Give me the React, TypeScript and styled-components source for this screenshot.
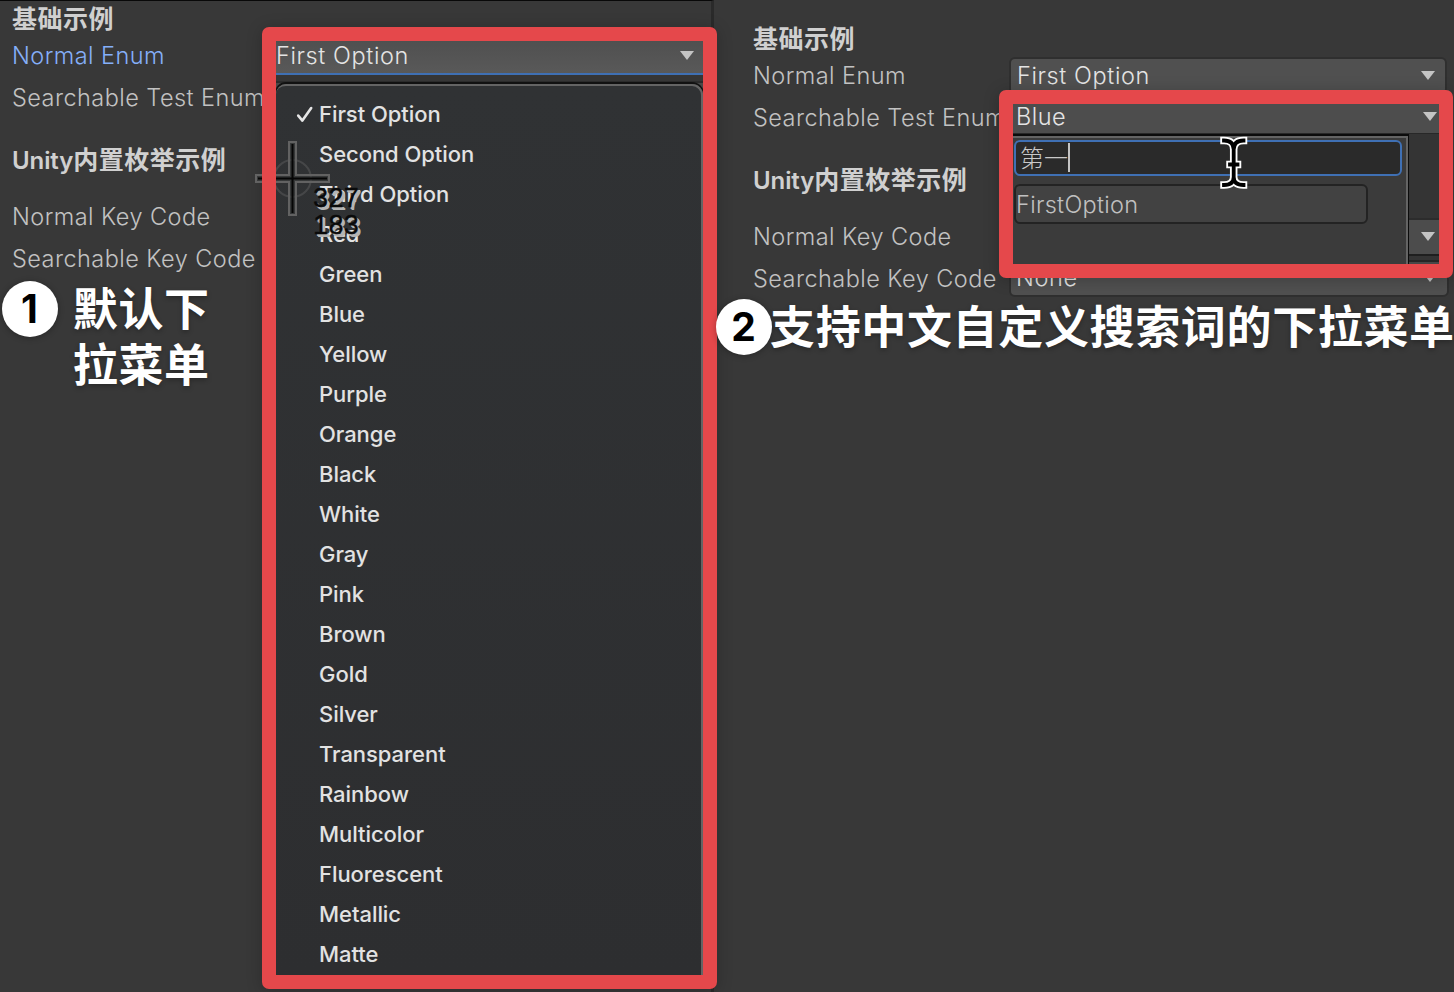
import React from "react";
import styled, { createGlobalStyle } from "styled-components";

const Global = createGlobalStyle`
  * { box-sizing: border-box; }
  html, body { margin: 0; padding: 0; background: #383838; }
  body { overflow: hidden; }
`;

const Page = styled.div`
  position: relative;
  display: flex;
  width: 1454px;
  height: 992px;
  overflow: hidden;
  background: #383838;
  font-family: Inter, "Noto Sans CJK SC", sans-serif;
`;

const Panel = styled.section<{ $divided?: boolean }>`
  display: flex;
  flex-direction: column;
  flex: none;
  width: ${(p) => (p.$divided ? "714px" : "740px")};
  height: 992px;
  padding: ${(p) => (p.$divided ? "2px 0 0 12px" : "23px 0 0 39px")};
  border-top: ${(p) => (p.$divided ? "1px solid #080808" : "none")};
  border-right: ${(p) => (p.$divided ? "3px solid #2a2a2a" : "none")};
`;

const Heading = styled.h2<{ $spaced?: boolean }>`
  margin: ${(p) => (p.$spaced ? "25px 0 20px" : "0")};
  height: 32px;
  line-height: 32px;
  font-size: 24px;
  font-weight: 600;
  letter-spacing: -0.1px;
  color: #d0d0d0;
  white-space: nowrap;
`;

const Cjk = styled.span`
  font-size: 25px;
  font-weight: 700;
  letter-spacing: 0.5px;
`;

const Row = styled.div`
  display: flex;
  align-items: center;
  height: 42px;
`;

const Label = styled.span<{ $active?: boolean }>`
  flex: none;
  width: 256px;
  font-size: 23.5px;
  font-weight: 350;
  line-height: 42px;
  letter-spacing: 0.45px;
  white-space: nowrap;
  color: ${(p) => (p.$active ? "#85aff9" : "#c2c2c2")};
`;

const Field = styled.div<{ $wide?: boolean }>`
  display: flex;
  align-items: center;
  justify-content: space-between;
  width: ${(p) => (p.$wide ? "440px" : "438px")};
  height: ${(p) => (p.$wide ? "36px" : "38px")};
  padding: 0 ${(p) => (p.$wide ? "10px 3px 5px" : "10px 2px 6px")};
  border: 2px solid #2f2f2f;
  border-radius: 6px;
  background: #505050;
  font-size: 23.5px;
  font-weight: 350;
  letter-spacing: 0.6px;
  color: #e4e4e4;
`;

const Arrow = styled.i`
  width: 0;
  height: 0;
  border: 7px solid transparent;
  border-top: 9px solid #c4c4c4;
  border-bottom: 0;
`;

const Frame = styled.div<{ $x: number; $y: number; $w: number; $h: number }>`
  position: absolute;
  left: ${(p) => p.$x}px;
  top: ${(p) => p.$y}px;
  width: ${(p) => p.$w}px;
  height: ${(p) => p.$h}px;
  border: 14px solid #e5484b;
  border-radius: 7px;
  overflow: hidden;
  background: #383838;
  box-shadow: 0 2px 16px rgba(0, 0, 0, 0.22);
`;

const OpenField = styled.div`
  display: flex;
  align-items: center;
  justify-content: space-between;
  height: 34px;
  padding: 0 9px 3px 0;
  border-bottom: 2px solid #3f70b4;
  background: linear-gradient(#505050, #595959);
  font-size: 23.5px;
  font-weight: 350;
  letter-spacing: 0.6px;
  color: #e4e4e4;
`;

const Gap = styled.div`
  height: 8px;
  border-bottom: 2px solid #2b2b2b;
  background: #363636;
`;

const MenuWrap = styled.div`
  height: 892px;
  padding-top: 1px;
  background: #484848;
`;

const Menu = styled.ul`
  margin: 0;
  width: 427px;
  height: 891px;
  padding: 8px 0 0 20px;
  list-style: none;
  border-top: 2px solid #646464;
  border-right: 2px solid #646464;
  border-radius: 10px 11px 0 0;
  background: linear-gradient(#303234, #2d2e30);
  box-shadow: 0 -1px 0 1px #111;
`;

const Item = styled.li`
  display: flex;
  align-items: center;
  height: 40px;
  font-size: 22px;
  font-weight: 500;
  letter-spacing: -0.05px;
  color: #e2e2e2;
`;

const CheckSlot = styled.span`
  display: flex;
  width: 23px;
`;

const BlueField = styled.div`
  display: flex;
  align-items: center;
  justify-content: space-between;
  height: 30px;
  padding: 0 2px 4px 3px;
  border-bottom: 1px solid #282828;
  background: #4d4d4d;
  font-size: 23.5px;
  font-weight: 350;
  letter-spacing: 0.5px;
  color: #e4e4e4;
`;

const SearchBody = styled.div`
  display: flex;
  height: 130px;
`;

const Popup = styled.div`
  width: 396px;
  height: 130px;
  padding: 4px 0 0 1px;
  border-top: 2px solid #0c0c0c;
  border-right: 1px solid #0c0c0c;
  background: #3b3b3b;
  box-shadow: inset -2px 2px 0 #646464;
`;

const SearchInput = styled.div`
  display: flex;
  align-items: center;
  width: 388px;
  height: 36px;
  padding: 0 0 2px 4px;
  border: 2px solid #3f70b4;
  border-radius: 6px;
  background: #2a2a2a;
  color: #c8c8c8;
  font-size: 24px;
  font-weight: 300;
`;

const SearchText = styled.span`
  position: relative;
  top: -1px;
`;

const Caret = styled.i`
  width: 2px;
  height: 29px;
  background: #c4c4c4;
`;

const Result = styled.div`
  display: flex;
  align-items: center;
  width: 354px;
  height: 40px;
  margin-top: 8px;
  border: 2px solid #232323;
  border-radius: 6px;
  background: #424242;
  color: #c0c0c0;
  font-size: 23.5px;
  font-weight: 350;
  letter-spacing: 0.3px;
`;

const Behind = styled.div`
  flex: 1;
  padding-top: 84px;
  background: #343434;
`;

const BehindField = styled.div`
  display: flex;
  align-items: center;
  height: 38px;
  padding: 0 0 2px 12px;
  border-top: 2px solid #2c2c2c;
  border-bottom: 2px solid #1f1f1f;
  background: #4c4c4c;
`;

const BehindNext = styled.div`
  height: 8px;
  margin-top: 4px;
  border-top: 2px solid #262626;
  background: #474747;
`;

const Badge = styled.div<{ $x: number; $y: number }>`
  position: absolute;
  left: ${(p) => p.$x}px;
  top: ${(p) => p.$y}px;
  width: 56px;
  height: 56px;
  border-radius: 50%;
  background: #fff;
  color: #000;
  font-size: 39px;
  font-weight: 700;
  line-height: 55px;
  text-align: center;
  box-shadow: 0 1px 6px rgba(0, 0, 0, 0.3);
`;

const Caption = styled.div<{ $x: number; $y: number }>`
  position: absolute;
  left: ${(p) => p.$x}px;
  top: ${(p) => p.$y}px;
  font-family: "Noto Sans CJK SC", sans-serif;
  font-size: 45px;
  font-weight: 700;
  letter-spacing: 0.65px;
  line-height: 56px;
  white-space: nowrap;
  color: #fff;
  text-shadow: 0 2px 5px rgba(0, 0, 0, 0.3);
`;

const Overlay = styled.svg<{ $x: number; $y: number }>`
  position: absolute;
  left: ${(p) => p.$x}px;
  top: ${(p) => p.$y}px;
  overflow: visible;
`;

const Coordinates = styled.div`
  position: absolute;
  left: 313px;
  top: 185px;
  font-family: "Liberation Sans", sans-serif;
  font-size: 27px;
  line-height: 27px;
  letter-spacing: 0.4px;
  color: #0a0a0a;
  -webkit-text-stroke: 0.3px #0a0a0a;
  text-shadow: 2px 2px 0 #b4b4b4, 3px 3px 0 #b4b4b4;
`;

const options = [
  "First Option", "Second Option", "Third Option", "Red", "Green", "Blue",
  "Yellow", "Purple", "Orange", "Black", "White", "Gray", "Pink", "Brown",
  "Gold", "Silver", "Transparent", "Rainbow", "Multicolor", "Fluorescent",
  "Metallic", "Matte",
];

const Check = () => (
  <svg width="18" height="18" viewBox="0 0 18 18" fill="none">
    <path d="M2.2 10.6 L6.4 15.6 L15.2 3" stroke="#e6e6e6" strokeWidth="2.6" strokeLinecap="round" strokeLinejoin="round" />
  </svg>
);

const beam =
  "M5 5.5Q14.7 5.5 14.7 14.5V42Q14.7 50 5 50M24.5 5.5Q14.7 5.5 14.7 14.5M14.7 42Q14.7 50 24.5 50M11 29.5h7.5";

export default function App() {
  return (
    <Page>
      <Global />
      <Panel $divided>
        <Heading><Cjk>基础示例</Cjk></Heading>
        <Row><Label $active>Normal Enum</Label></Row>
        <Row><Label>Searchable Test Enum</Label></Row>
        <Heading $spaced>Unity<Cjk>内置枚举示例</Cjk></Heading>
        <Row><Label>Normal Key Code</Label></Row>
        <Row><Label>Searchable Key Code</Label></Row>
      </Panel>
      <Panel>
        <Heading><Cjk>基础示例</Cjk></Heading>
        <Row><Label>Normal Enum</Label><Field>First Option<Arrow /></Field></Row>
        <Row><Label>Searchable Test Enum</Label></Row>
        <Heading $spaced>Unity<Cjk>内置枚举示例</Cjk></Heading>
        <Row><Label>Normal Key Code</Label></Row>
        <Row><Label>Searchable Key Code</Label><Field $wide>None<Arrow /></Field></Row>
      </Panel>

      <Frame $x={262} $y={27} $w={455} $h={962}>
        <OpenField>First Option<Arrow /></OpenField>
        <Gap />
        <MenuWrap>
          <Menu>
            {options.map((name, i) => (
              <Item key={name}><CheckSlot>{i === 0 && <Check />}</CheckSlot>{name}</Item>
            ))}
          </Menu>
        </MenuWrap>
      </Frame>

      <Frame $x={999} $y={90} $w={454} $h={188}>
        <BlueField>Blue<Arrow /></BlueField>
        <SearchBody>
          <Popup>
            <SearchInput><SearchText>第一</SearchText><Caret /></SearchInput>
            <Result>FirstOption</Result>
          </Popup>
          <Behind>
            <BehindField><Arrow /></BehindField>
            <BehindNext />
          </Behind>
        </SearchBody>
      </Frame>

      <Overlay $x={255} $y={140} width="76" height="76" viewBox="0 0 76 76" fill="none">
        <circle cx="37.5" cy="38.5" r="18.5" stroke="#707070" strokeOpacity=".35" strokeWidth="2" />
        <path d="M34 2h7v33h33v7H41v33h-7V42H1v-7h33z" fill="#3c3d3e" fillOpacity=".6" stroke="#626262" strokeWidth="2" />
        <path d="M37.5 4v69M3 38.5h69" stroke="#050505" strokeWidth="2" />
        <path d="M7 18h14v41H7z" fill="#e5484b" />
      </Overlay>
      <Coordinates>327<br />183</Coordinates>

      <Overlay $x={1219} $y={135} width="30" height="56" viewBox="0 0 30 56" fill="none">
        <path d={beam} stroke="#fff" strokeWidth="7.5" strokeLinecap="square" strokeLinejoin="round" />
        <path d={beam} stroke="#000" strokeWidth="3.8" strokeLinecap="square" strokeLinejoin="round" />
      </Overlay>

      <Badge $x={1.5} $y={281}>1</Badge>
      <Caption $x={72.8} $y={278.5}>默认下<br />拉菜单</Caption>
      <Badge $x={715.5} $y={298.5}>2</Badge>
      <Caption $x={770} $y={297}>支持中文自定义搜索词的下拉菜单</Caption>
    </Page>
  );
}
